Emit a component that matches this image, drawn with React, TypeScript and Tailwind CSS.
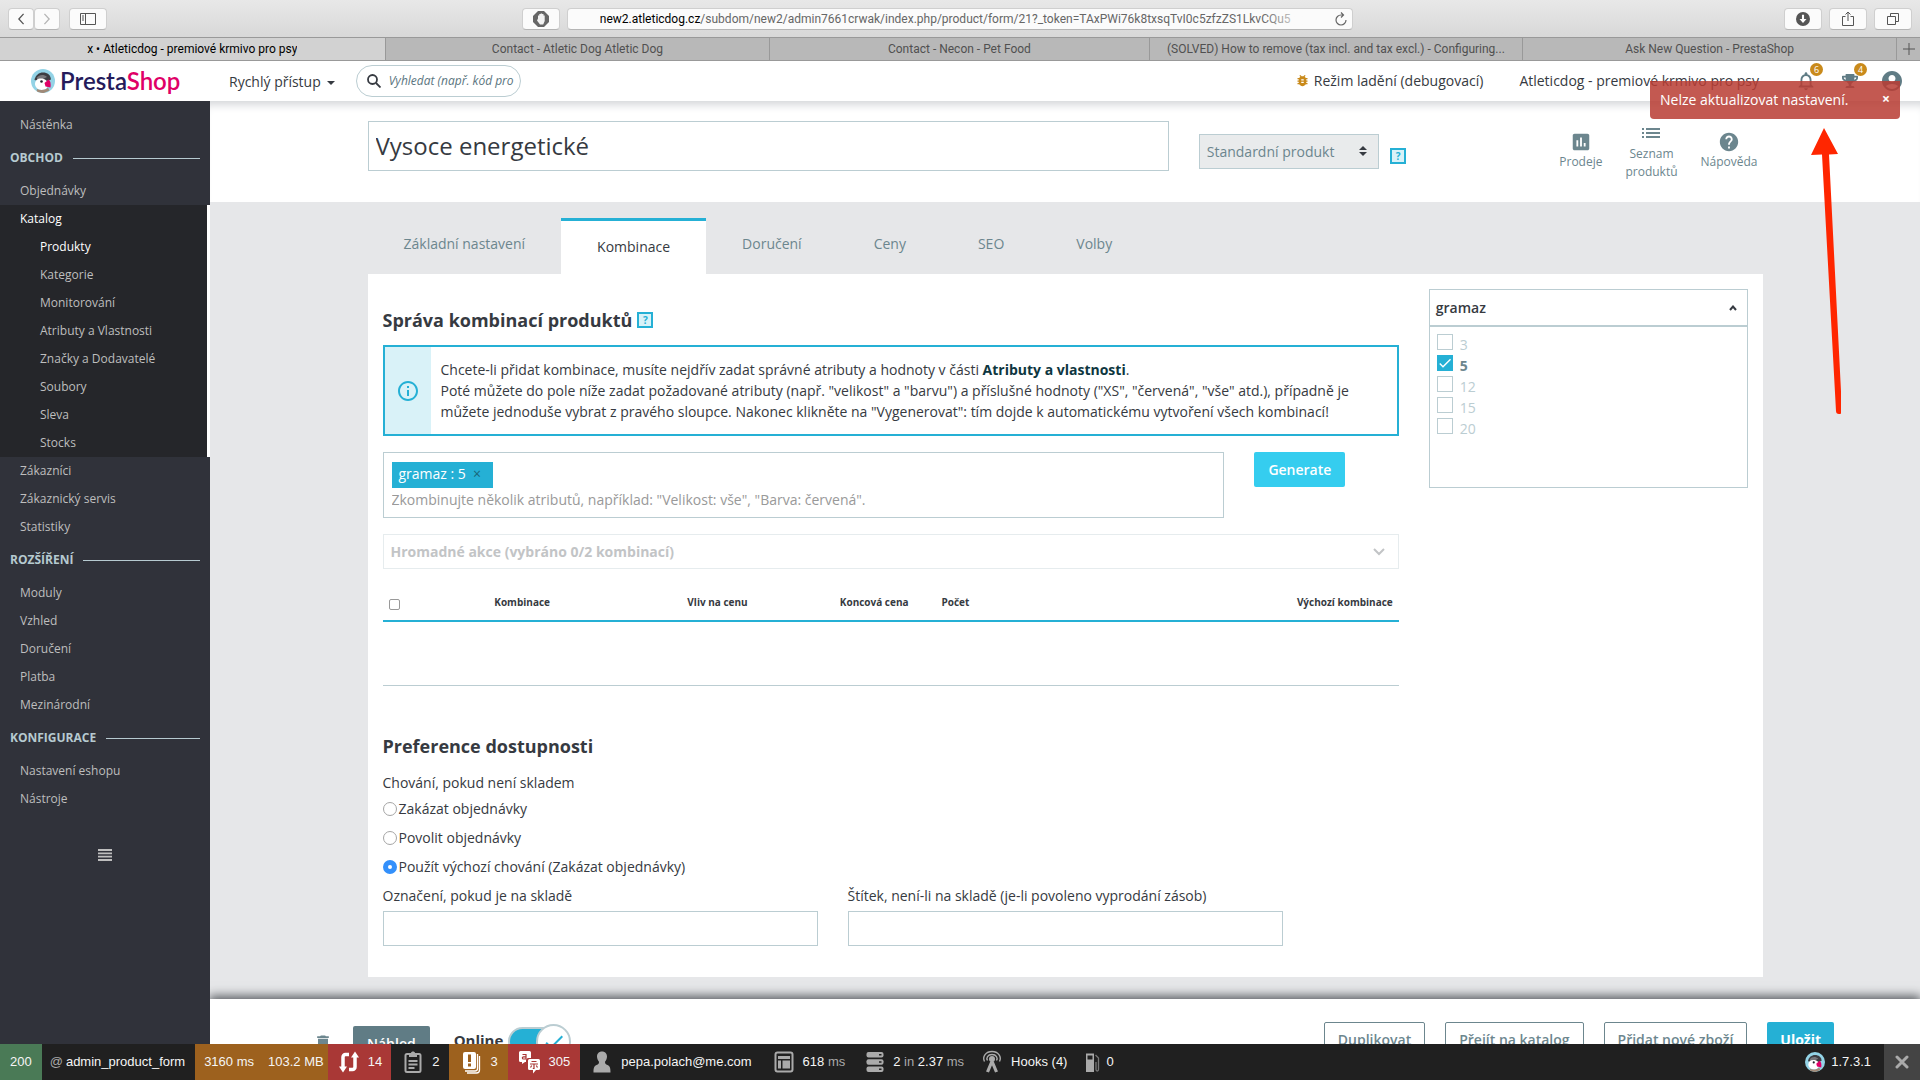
import type { ReactNode } from "react";
import {
  MdAccountCircle,
  MdAssessment,
  MdBugReport,
  MdCheck,
  MdDelete,
  MdHelp,
  MdInfoOutline,
  MdList,
  MdNotificationsNone,
} from "react-icons/md";
import { FaTrophy } from "react-icons/fa";

/* ---------- small drawings ---------- */

function Puffin({ className }: { className: string }) {
  return (
    <svg viewBox="0 0 24 24" className={className} aria-hidden="true">
      <clipPath id="puffin-disc">
        <circle cx="12" cy="12" r="12" />
      </clipPath>
      <g clipPath="url(#puffin-disc)">
        <rect width="24" height="24" fill="#93d3e6" />
        <path d="M3.500 11C4.500 6 8 3.500 12 3.500c4.500 0 7.500 2.500 8 7L13 13z" fill="#3d3d42" />
        <path d="M6 8.500C8 5.500 13 5 16 8l-4 2-6 1z" fill="#77777b" />
        <path d="M4 15c0-3.500 2.500-5.500 6-5.500 4 0 7 2.500 7 5.500 0 3-2 6-6 6s-7-3-7-6z" fill="#fff" />
        <circle cx="10.500" cy="12.500" r="1.300" fill="#22222a" />
        <path d="M13.500 14l4-3.500c2 1.500 2.500 4 2 8l-5-1z" fill="#df0067" />
        <path d="M6 20c3 1.500 8 1.500 11-1.500l1.500 3L12 24.500 5.500 23z" fill="#a08a78" />
      </g>
    </svg>
  );
}

function LoopIcon() {
  return (
    <svg viewBox="0 0 24 24" className="size-6" fill="none" stroke="#fff" strokeWidth="3.500" aria-hidden="true">
      <path d="M12 4.500H8.500a2.500 2.500 0 0 0-2.500 2.500v12M12 19.500h3.500a2.500 2.500 0 0 0 2.500-2.500V6" />
      <path d="M2 16.500h8L6 22.500zM14 7.500h8L18 1.500z" fill="#fff" stroke="none" />
    </svg>
  );
}

function ClipboardIcon() {
  return (
    <svg viewBox="0 0 24 24" className="size-6" fill="none" stroke="#aaa" strokeWidth="2" aria-hidden="true">
      <rect x="4.500" y="4" width="15" height="18" rx="1.500" />
      <path d="M7.500 11h9M7.500 14.500h9M7.500 18h6" />
      <path d="M8 3h2c0-2 4-2 4 0h2v4H8z" fill="#aaa" stroke="none" />
    </svg>
  );
}

function WarningPagesIcon() {
  return (
    <svg viewBox="0 0 24 24" className="size-6" fill="none" aria-hidden="true">
      <rect x="4" y="2" width="13" height="17" rx="2" fill="#fff" />
      <path d="M18.500 4v14.500c0 1.500-1 2.500-2.500 2.500H6M20.500 6v14c0 1.800-1 3-3 3H8" stroke="#fff" strokeWidth="1.300" />
      <path d="M9 4.500h3V12H9zM9 13.500h3v3H9z" fill="#9d611e" />
    </svg>
  );
}

function TranslateIcon() {
  return (
    <svg viewBox="0 0 24 24" className="size-6" aria-hidden="true">
      <path d="M2.500 1h9A1.500 1.500 0 0 1 13 2.500V8h-2.500A2.500 2.500 0 0 0 8 10.500V12H7l-3 2v-2H2.500A1.500 1.500 0 0 1 1 10.500v-8A1.500 1.500 0 0 1 2.500 1z" fill="#fff" />
      <path d="M4.500 4.500h3.500v4.500H5.500c-1.500 0-1.500-2.200 0-2.200H8" fill="none" stroke="#a93836" strokeWidth="1.200" />
      <path d="M11.500 9h9a1.500 1.500 0 0 1 1.500 1.500v8a1.500 1.500 0 0 1-1.500 1.500H18l-3 3.500V20h-3.500a1.500 1.500 0 0 1-1.500-1.500v-8A1.500 1.500 0 0 1 11.500 9z" fill="#fff" />
      <path d="M13.500 11.500h5M12 14h8M16 14v4.500h-1.200M13.700 15.500l-1.200 2M18.300 15.500l1.200 2" fill="none" stroke="#a93836" strokeWidth="1.200" />
    </svg>
  );
}

function PersonIcon() {
  return (
    <svg viewBox="0 0 24 24" className="size-6" fill="#aaa" aria-hidden="true">
      <path d="M12 1.500c3.200 0 5 2.300 5 5 0 2-1 4-2 5.200 0 2 .5 2.300 2.500 3.300 2.500 1.300 3 3 3 7.500h-17c0-4.500.500-6.200 3-7.500 2-1 2.500-1.300 2.500-3.300-1-1.200-2-3.200-2-5.200 0-2.700 1.800-5 5-5z" />
    </svg>
  );
}

function LayoutIcon() {
  return (
    <svg viewBox="0 0 24 24" className="size-6" aria-hidden="true">
      <rect x="3.500" y="2.500" width="17" height="19" rx="2" fill="none" stroke="#aaa" strokeWidth="2" />
      <path d="M6 6h12v3H6zM6 10.500h3v8H6zM10.500 10.500H18v8h-7.500z" fill="#aaa" />
    </svg>
  );
}

function DatabaseIcon() {
  return (
    <svg viewBox="0 0 24 24" className="size-6" aria-hidden="true">
      <rect x="3.500" y="2" width="17" height="5.500" rx="2" fill="#aaa" />
      <rect x="3.500" y="9.250" width="17" height="5.500" rx="2" fill="#aaa" />
      <rect x="3.500" y="16.500" width="17" height="5.500" rx="2" fill="#aaa" />
      <path d="M16 4h2.500v1.500H16zM16 11.250h2.500v1.500H16zM16 18.500h2.500V20H16z" fill="#222" />
    </svg>
  );
}

function HooksIcon() {
  return (
    <svg viewBox="0 0 24 24" className="size-6" fill="none" stroke="#aaa" aria-hidden="true">
      <circle cx="12" cy="9" r="3" fill="#aaa" stroke="none" />
      <path d="M12 9v5M11.500 12.500l-4 9.500M12.500 12.500l4 9.500" strokeWidth="3.200" />
      <path d="M7.500 10.500C6 8 7.500 4.500 12 4.500s6 3.500 4.500 6M4.500 11.500C2 6.500 6 1.500 12 1.500s10 5 7.500 10" strokeWidth="1.400" />
    </svg>
  );
}

function FuelIcon() {
  return (
    <svg viewBox="0 0 24 24" className="size-6" aria-hidden="true">
      <path d="M5 3.500h8V22H5z" fill="#aaa" />
      <path d="M6.500 5.500h5v4h-5z" fill="#222" />
      <path d="M14.500 5l3 3v11.500c0 2-2.500 2-2.500 0V12" fill="none" stroke="#777" strokeWidth="1.300" />
    </svg>
  );
}

/* ---------- browser window ---------- */

const chromeButton =
  "flex h-[22px] items-center justify-center rounded border border-[#cfcfcf] border-b-[#b5b5b5] bg-[#fbfbfb] text-[#555]";

function BrowserChrome() {
  const tabs = [
    { title: "Contact - Atletic Dog Atletic Dog", grow: "flex-[385]" },
    { title: "Contact - Necon - Pet Food", grow: "flex-[379]" },
    { title: "(SOLVED) How to remove (tax incl. and tax excl.) - Configuring...", grow: "flex-[373]" },
    { title: "Ask New Question - PrestaShop", grow: "flex-[373]" },
  ];
  return (
    <div className="shrink-0 font-[Roboto,sans-serif]">
      <div className="flex h-[37px] items-center bg-linear-to-b from-[#e8e8e8] to-[#d8d8d8] px-2">
        <div className="flex flex-[514] items-center">
          <button className={chromeButton + " w-[26px]"} aria-label="Back">
            <svg viewBox="0 0 8 14" className="h-3 w-2" fill="none" stroke="#555" strokeWidth="1.500">
              <path d="M7 1L1.500 7 7 13" />
            </svg>
          </button>
          <button className={chromeButton + " w-[26px]"} aria-label="Forward">
            <svg viewBox="0 0 8 14" className="h-3 w-2" fill="none" stroke="#b5b5b5" strokeWidth="1.500">
              <path d="M1 1l5.500 6L1 13" />
            </svg>
          </button>
          <button className={chromeButton + " ml-[9px] w-[38px]"} aria-label="Sidebar">
            <svg viewBox="0 0 16 12" className="h-3 w-4" fill="none" stroke="#555">
              <path d="M.5.500h15v11H.500zM5.500.500v11M2 3h2M2 5h2M2 7h2" />
            </svg>
          </button>
        </div>
        <button className={chromeButton + " w-[38px]"} aria-label="Blocker">
          <svg viewBox="0 0 16 16" className="size-4">
            <path d="M5 0h6l5 5v6l-5 5H5l-5-5V5z" fill="#666" />
            <path d="M5 7.500V4.500h1.300V3h1.400v-.500h1.400V3h1.400v1.500h1.200v5.500l-1.500 3.500H7L4 9.500z" fill="#f2f2f2" />
          </svg>
        </button>
        <div className="ml-[7px] flex h-[22px] w-[41.3%] items-center rounded border border-[#cfcfcf] border-b-[#b5b5b5] bg-[#fbfbfb] pr-1 pl-8">
          <p className="relative flex-1 overflow-hidden text-[12px] whitespace-nowrap text-[#666]">
            <span className="text-black">new2.atleticdog.cz</span>
            /subdom/new2/admin7661crwak/index.php/product/form/21?_token=TAxPWi76k8txsqTvI0c5zfzZS1LkvCQu5
            <span className="absolute inset-y-0 right-6 w-12 bg-linear-to-r from-transparent to-[#fbfbfb]" />
          </p>
          <button aria-label="Reload">
            <svg viewBox="0 0 14 14" className="size-3.5" fill="none" stroke="#666" strokeWidth="1.200">
              <path d="M9 3H7a5 5 0 1 0 5 5M7 .500L9.500 3 7 5.500" />
            </svg>
          </button>
        </div>
        <div className="flex flex-[559] justify-end gap-[7px]">
          <button className={chromeButton + " w-[38px]"} aria-label="Downloads">
            <svg viewBox="0 0 16 16" className="size-3.5">
              <circle cx="8" cy="8" r="8" fill="#555" />
              <path d="M6.800 3h2.400v5H12l-4 4.500L4 8h2.800z" fill="#fff" />
            </svg>
          </button>
          <button className={chromeButton + " w-[38px]"} aria-label="Share">
            <svg viewBox="0 0 12 16" className="h-4 w-3" fill="none" stroke="#555">
              <path d="M3.500 5.500h-3v9h11v-9h-3M6 10V1M3.500 3.500L6 1l2.500 2.500" />
            </svg>
          </button>
          <button className={chromeButton + " w-[38px]"} aria-label="Windows">
            <svg viewBox="0 0 14 14" className="size-3.5" fill="none" stroke="#555">
              <path d="M1.500 4.500h8v8h-8zM4.500 4V1.500h8v8H10" />
            </svg>
          </button>
        </div>
      </div>
      <div className="flex h-6 border-y border-[#999] bg-[#b8b8b8] text-[12px] text-[#505050]">
        <div className="flex min-w-0 flex-[386] items-center justify-center bg-[#d2d2d2] px-4 text-black">
          <span className="truncate">x • Atleticdog - premiové krmivo pro psy</span>
        </div>
        {tabs.map((tab) => (
          <div
            key={tab.title}
            className={"flex min-w-0 items-center justify-center border-l border-[#999] px-4 " + tab.grow}
          >
            <span className="truncate">{tab.title}</span>
          </div>
        ))}
        <button className="flex w-6 items-center justify-center border-l border-[#999]" aria-label="New tab">
          <svg viewBox="0 0 12 12" className="size-3" stroke="#555">
            <path d="M6 0v12M0 6h12" />
          </svg>
        </button>
      </div>
    </div>
  );
}

/* ---------- admin page ---------- */

function Badge({ children }: { children: ReactNode }) {
  return (
    <span className="absolute -top-[7px] -right-1.5 flex size-[13px] items-center justify-center rounded-full bg-[#c98a1b] text-[9px] text-white">
      {children}
    </span>
  );
}

function Header() {
  return (
    <header className="relative z-10 flex h-10 shrink-0 items-center bg-white text-[14px] text-[#363a41]">
      <a href="#home" className="ml-[31px] flex w-[198px] items-center gap-[5px]">
        <Puffin className="size-6" />
        <span className="font-[Lato,sans-serif] text-[24px] leading-6 font-semibold text-[#251b5b]">
          Presta<span className="text-[#df0067]">Shop</span>
        </span>
      </a>
      <button className="flex items-center gap-1.5">
        Rychlý přístup
        <svg viewBox="0 0 8 4" className="mt-1 h-1 w-2" fill="#363a41">
          <path d="M0 0h8L4 4z" />
        </svg>
      </button>
      <label className="ml-[21px] flex h-8 w-[165px] items-center gap-2 rounded-full border border-[#bbcdd2] pr-1 pl-[10px]">
        <svg viewBox="0 0 14 14" className="size-3.5 shrink-0" fill="none" stroke="#363a41" strokeWidth="1.800">
          <circle cx="5.500" cy="5.500" r="4.500" />
          <path d="M9 9l4.500 4.500" />
        </svg>
        <input
          aria-label="Vyhledat"
          placeholder="Vyhledat (např. kód pro"
          className="w-full min-w-0 text-[12px] italic outline-none placeholder:text-[#5b7580]"
        />
      </label>
      <div className="ml-auto flex items-center">
        <a href="#debug" className="flex items-center gap-1 pb-0.5">
          <MdBugReport className="size-[15px] text-[#c98a1b]" />
          Režim ladění (debugovací)
        </a>
        <a href="#shop" className="ml-9 pb-0.5">Atleticdog - premiové krmivo pro psy</a>
        <button className="relative ml-9 flex size-[22px] items-center justify-center" aria-label="Oznámení">
          <MdNotificationsNone className="size-[22px] text-[#607c85]" />
          <Badge>6</Badge>
        </button>
        <button className="relative ml-[22px] flex size-[22px] items-center justify-center" aria-label="Ocenění">
          <FaTrophy className="size-4 text-[#607c85]" />
          <Badge>4</Badge>
        </button>
        <button className="mr-4 ml-[19px]" aria-label="Účet">
          <MdAccountCircle className="size-6 text-[#607c85]" />
        </button>
      </div>
    </header>
  );
}

function MenuItem({ children }: { children: ReactNode }) {
  return (
    <li>
      <a href="#menu" className="block h-7 pl-5 leading-7">{children}</a>
    </li>
  );
}

function MenuTitle({ children }: { children: ReactNode }) {
  return (
    <li className="flex h-[38px] items-center gap-2.5 px-2.5 font-bold text-[#b6cad0] uppercase">
      {children}
      <span className="h-px flex-1 bg-[#b6cad0]" />
    </li>
  );
}

function Sidebar() {
  const catalog = ["Kategorie", "Monitorování", "Atributy a Vlastnosti", "Značky a Dodavatelé", "Soubory", "Sleva", "Stocks"];
  return (
    <nav className="w-[210px] shrink-0 bg-[#30323a] pt-[10px] text-[12px] text-[#bebebe]">
      <ul>
        <MenuItem>Nástěnka</MenuItem>
        <MenuTitle>Obchod</MenuTitle>
        <MenuItem>Objednávky</MenuItem>
        <li className="border-r-[3px] border-white bg-[#25262a]">
          <a href="#catalog" className="block h-7 pl-5 leading-7 font-medium text-white">Katalog</a>
          <ul className="pl-5">
            <li>
              <a href="#products" className="block h-7 pl-5 leading-7 font-medium text-white">Produkty</a>
            </li>
            {catalog.map((name) => (
              <MenuItem key={name}>{name}</MenuItem>
            ))}
          </ul>
        </li>
        <MenuItem>Zákazníci</MenuItem>
        <MenuItem>Zákaznický servis</MenuItem>
        <MenuItem>Statistiky</MenuItem>
        <MenuTitle>Rozšíření</MenuTitle>
        <MenuItem>Moduly</MenuItem>
        <MenuItem>Vzhled</MenuItem>
        <MenuItem>Doručení</MenuItem>
        <MenuItem>Platba</MenuItem>
        <MenuItem>Mezinárodní</MenuItem>
        <MenuTitle>Konfigurace</MenuTitle>
        <MenuItem>Nastavení eshopu</MenuItem>
        <MenuItem>Nástroje</MenuItem>
      </ul>
      <button className="mx-auto mt-9 block" aria-label="Sbalit menu">
        <svg viewBox="0 0 14 12" className="h-3 w-3.5" stroke="#bebebe" strokeWidth="1.800">
          <path d="M0 1h14M0 4.300h14M0 7.700h14M0 11h14" />
        </svg>
      </button>
    </nav>
  );
}

function HelpBox() {
  return (
    <button
      className="flex size-4 shrink-0 items-center justify-center border-2 border-[#25b0d5] bg-[#d9f2f8] text-[10px] font-bold text-[#25b0d5]"
      aria-label="Nápověda k poli"
    >
      ?
    </button>
  );
}

function ProductHeader() {
  return (
    <div className="h-[101px] shrink-0 bg-white shadow-[inset_0_10px_8px_-6px_#d5d7da]">
      <div className="mx-auto flex w-10/12 pt-5">
        <div className="w-7/12 px-[15px]">
          <input
            aria-label="Název produktu"
            defaultValue="Vysoce energetické"
            className="h-[50px] w-full border border-[#bbcdd2] px-[7px] pb-0.5 text-[24px] text-[#363a41]"
          />
        </div>
        <div className="flex w-2/12 items-start gap-[11px] px-[15px] pt-[13px]">
          <div className="relative flex-1">
            <select
              aria-label="Typ produktu"
              className="block h-[35px] w-full appearance-none border border-[#bbcdd2] bg-[#e9ebec] pl-[7px] text-[14px] text-[#6c868e]"
            >
              <option>Standardní produkt</option>
            </select>
            <svg viewBox="0 0 8 10" className="pointer-events-none absolute top-3 right-3 h-2.5 w-2" fill="#363a41">
              <path d="M0 4l4-4 4 4zM0 6h8l-4 4z" />
            </svg>
          </div>
          <div className="pt-3.5">
            <HelpBox />
          </div>
        </div>
        <div className="flex flex-1 items-center justify-end gap-[22px] pr-5 text-center text-[12px] leading-[18px] text-[#6c868e]">
          <a href="#sales" className="flex flex-col items-center">
            <MdAssessment className="size-[22px]" />
            Prodeje
          </a>
          <a href="#list" className="flex w-[54px] flex-col items-center">
            <MdList className="size-6" />
            Seznam produktů
          </a>
          <a href="#help" className="flex flex-col items-center">
            <MdHelp className="size-[22px]" />
            Nápověda
          </a>
        </div>
      </div>
    </div>
  );
}

function Tabs() {
  return (
    <div role="tablist" className="flex h-14 text-[14px] text-[#6c868e]">
      <button role="tab" className="px-9 pb-1.5">Základní nastavení</button>
      <button role="tab" aria-selected="true" className="border-t-[3px] border-[#25b0d5] bg-white px-9 pb-0.5 text-[#363a41]">
        Kombinace
      </button>
      {["Doručení", "Ceny", "SEO", "Volby"].map((name) => (
        <button key={name} role="tab" className="px-9 pb-1.5">{name}</button>
      ))}
    </div>
  );
}

function Combinations() {
  return (
    <section className="px-[15px]">
      <h2 className="flex h-[26px] items-center gap-[5px] text-[18px] font-bold">
        Správa kombinací produktů
        <HelpBox />
      </h2>
      <div className="mt-3 flex h-[91px] border-2 border-[#25b0d5]">
        <div className="flex w-[46px] shrink-0 items-center justify-center bg-[#d9f2f8]">
          <MdInfoOutline className="size-6 text-[#25b0d5]" />
        </div>
        <p className="flex-1 self-center pr-2 pl-[10px] text-[14px] leading-[21px]">
          Chcete-li přidat kombinace, musíte nejdřív zadat správné atributy a hodnoty v části{" "}
          <a href="#attributes" className="font-bold text-[#0e3640]">Atributy a vlastnosti</a>.
          <br />
          Poté můžete do pole níže zadat požadované atributy (např. "velikost" a "barvu") a příslušné hodnoty ("XS",
          "červená", "vše" atd.), případně je můžete jednoduše vybrat z pravého sloupce. Nakonec klikněte na
          "Vygenerovat": tím dojde k automatickému vytvoření všech kombinací!
        </p>
      </div>
      <div className="-mx-[15px] mt-4 flex items-start">
        <div className="w-10/12 px-[15px]">
          <div className="h-[66px] border border-[#bbcdd2] px-2 pt-2">
            <span className="inline-flex h-[26px] items-center bg-[#25b0d5] pr-3 pb-0.5 pl-[7px] text-[14px] text-white">
              gramaz : 5
              <button className="ml-[7px] text-[14px] leading-none text-[#1a6579]" aria-label="Odebrat gramaz : 5">×</button>
            </span>
            <input
              aria-label="Atributy"
              placeholder={'Zkombinujte několik atributů, například: "Velikost: vše", "Barva: červená".'}
              className="block h-6 w-full text-[14px] outline-none placeholder:text-[#999]"
            />
          </div>
        </div>
        <div className="w-2/12 px-[15px]">
          <button className="h-[35px] rounded-xs bg-[#35cdef] px-3.5 text-[14px] font-semibold text-white">Generate</button>
        </div>
      </div>
      <button className="mt-4 flex h-[35px] w-full items-center justify-between border border-[#e6ecee] pr-[13px] pl-[7px] text-[14px] font-bold text-[#c2c4c6]">
        Hromadné akce (vybráno 0/2 kombinací)
        <svg viewBox="0 0 12 8" className="h-2 w-3" fill="none" stroke="#c2c4c6" strokeWidth="2">
          <path d="M1 1l5 5 5-5" />
        </svg>
      </button>
      <table className="mt-[15px] w-full table-fixed border-b border-[#bbcdd2] text-left text-[10px]">
        <thead>
          <tr className="h-[37px] border-b-2 border-[#25b0d5]">
            <th className="w-[11%] pl-[6px] align-middle">
              <input
                type="checkbox"
                aria-label="Vybrat vše"
                className="mt-1 block size-[11px] appearance-none rounded-xs border border-[#999]"
              />
            </th>
            <th className="w-[19%]">Kombinace</th>
            <th className="w-[15%]">Vliv na cenu</th>
            <th className="w-[10%]">Koncová cena</th>
            <th>Počet</th>
            <th className="pr-[6px] text-right">Výchozí kombinace</th>
          </tr>
        </thead>
        <tbody>
          <tr className="h-16">
            <td colSpan={6} />
          </tr>
        </tbody>
      </table>
    </section>
  );
}

function AttributePicker() {
  const values = ["3", "5", "12", "15", "20"];
  return (
    <aside className="w-3/12 px-[15px] pt-[15px]">
      <div className="h-[199px] border border-[#bbcdd2]">
        <button className="flex h-[37px] w-full items-center justify-between border-b-2 border-[#bbcdd2] pr-2.5 pl-[6px] text-[14px] font-semibold">
          gramaz
          <svg viewBox="0 0 8 6" className="h-1.5 w-2" fill="none" stroke="#363a41" strokeWidth="2">
            <path d="M1 5l3-3.500L7 5" />
          </svg>
        </button>
        <div className="pt-[7px] pl-[7px] text-[14px] text-[#bbcdd2]">
          {values.map((value) => (
            <label key={value} className="flex h-[21px] gap-[7px] leading-[22px] has-checked:font-bold has-checked:text-[#6c868e]">
              <span className="relative">
                <input
                  type="checkbox"
                  defaultChecked={value === "5"}
                  className="peer block size-4 appearance-none border border-[#bbcdd2] checked:border-[#25b0d5] checked:bg-[#25b0d5]"
                />
                <MdCheck className="pointer-events-none absolute top-0 left-0 hidden size-4 text-white peer-checked:block" />
              </span>
              {value}
            </label>
          ))}
        </div>
      </div>
    </aside>
  );
}

function Availability() {
  const options = ["Zakázat objednávky", "Povolit objednávky", "Použít výchozí chování (Zakázat objednávky)"];
  const field = "mt-[5px] block h-[35px] w-full border border-[#bbcdd2] px-2";
  return (
    <section className="px-[15px] pt-[47px] text-[14px]">
      <h2 className="text-[18px] leading-[26px] font-bold">Preference dostupnosti</h2>
      <fieldset className="pt-[13px]">
        <legend className="float-left w-full leading-[21px]">Chování, pokud není skladem</legend>
        <div className="clear-both pt-px">
          {options.map((option, index) => (
            <label key={option} className="flex h-[29px] items-center gap-0.5">
              <input
                type="radio"
                name="out-of-stock"
                defaultChecked={index === 2}
                className="mt-0.5 size-3.5 appearance-none rounded-full border border-[#a5a5a5] checked:border-[5px] checked:border-[#3390fb]"
              />
              {option}
            </label>
          ))}
        </div>
      </fieldset>
      <div className="grid grid-cols-[repeat(3,minmax(0,1fr))] gap-[30px] pt-1">
        <label className="leading-[21px]">
          Označení, pokud je na skladě
          <input className={field} />
        </label>
        <label className="leading-[21px] whitespace-nowrap">
          Štítek, není-li na skladě (je-li povoleno vyprodání zásob)
          <input className={field} />
        </label>
      </div>
    </section>
  );
}

function ActionBar() {
  const outline = "h-[35px] rounded-xs border border-[#6c868e] px-[13px] text-[#6c868e]";
  return (
    <div className="relative z-10 mt-auto flex h-[45px] shrink-0 items-start justify-between overflow-hidden bg-white pr-[86px] pl-[103px] text-[14px] font-semibold shadow-[0_-2px_10px_1px_#55595e]">
      <div className="flex items-start pt-[25px]">
        <button className="pt-[9px]" aria-label="Smazat">
          <MdDelete className="size-5 text-[#6c868e]" />
        </button>
        <button className="mt-0.5 ml-5 h-[35px] rounded-xs bg-[#607c85] px-[14px] text-white">Náhled</button>
        <label className="ml-6 flex items-start gap-[5px]">
          <span className="pt-1 text-[15px] leading-6 font-bold">Online</span>
          <span className="relative block h-[35px] w-[63px]">
            <input
              type="checkbox"
              role="switch"
              defaultChecked
              className="mt-[3px] block h-[29px] w-[60px] appearance-none rounded-full border-2 border-[#bbcdd2] bg-[#25b0d5]"
            />
            <span className="absolute top-0 right-0 flex size-[35px] items-center justify-center rounded-full border-2 border-[#bbcdd2] bg-white">
              <MdCheck className="size-6 text-[#25b0d5]" />
            </span>
          </span>
        </label>
      </div>
      <div className="flex gap-5 pt-[23px]">
        <button className={outline}>Duplikovat</button>
        <button className={outline}>Přejít na katalog</button>
        <button className={outline}>Přidat nové zboží</button>
        <button className="h-[35px] rounded-xs bg-[#25b0d5] px-[13px] font-bold text-white">Uložit</button>
      </div>
    </div>
  );
}

function DebugBar() {
  return (
    <div className="relative z-20 flex h-9 shrink-0 items-stretch bg-[#202020] font-['Liberation_Sans',Arial,sans-serif] text-[13px] text-[#f5f5f5] *:flex *:items-center">
      <div className="bg-[#4a7a56] px-[10px]">200</div>
      <div className="gap-[3px] pr-2.5 pl-2">
        <span className="text-[#aaa]">@</span>admin_product_form
      </div>
      <div className="gap-3.5 bg-[#9d611e] pr-1 pl-[9px]">
        <span>3160 ms</span>
        <span>103.2 MB</span>
      </div>
      <div className="gap-[7px] bg-[#a93836] px-[9px]"><LoopIcon />14</div>
      <div className="gap-[7px] px-2.5"><ClipboardIcon />2</div>
      <div className="gap-[7px] bg-[#9d611e] px-2.5"><WarningPagesIcon />3</div>
      <div className="gap-[7px] bg-[#a93836] px-2.5"><TranslateIcon />305</div>
      <div className="gap-[7px] px-2.5"><PersonIcon />pepa.polach@me.com</div>
      <div className="gap-[7px] px-2.5"><LayoutIcon /><span>618 <span className="text-[#aaa]">ms</span></span></div>
      <div className="gap-[6px] px-2">
        <DatabaseIcon />
        <span>2 <span className="text-[#aaa]">in</span> 2.37 <span className="text-[#aaa]">ms</span></span>
      </div>
      <div className="gap-[7px] px-2"><HooksIcon />Hooks (4)</div>
      <div className="gap-px pr-2.5 pl-1.5"><FuelIcon />0</div>
      <div className="ml-auto gap-[6px] pr-[13px]"><Puffin className="size-5" />1.7.3.1</div>
      <button className="w-9 justify-center bg-[#444]" aria-label="Zavřít">
        <svg viewBox="0 0 14 14" className="size-3.5" stroke="#aaa" strokeWidth="3" strokeLinecap="round">
          <path d="M2 2l10 10M12 2L2 12" />
        </svg>
      </button>
    </div>
  );
}

export default function App() {
  return (
    <div className="relative flex h-screen flex-col overflow-hidden bg-[#e6e7e9] font-['Open_Sans',sans-serif] text-[#363a41]">
      <BrowserChrome />
      <Header />
      <div className="flex min-h-0 flex-1">
        <Sidebar />
        <main className="flex min-w-0 flex-1 flex-col overflow-hidden">
          <ProductHeader />
          <div className="mx-auto w-10/12 px-[15px] pt-4">
            <Tabs />
            <div className="bg-white pb-[31px]">
              <div className="flex">
                <div className="w-9/12 pt-[33px]">
                  <Combinations />
                </div>
                <AttributePicker />
              </div>
              <Availability />
            </div>
          </div>
          <ActionBar />
        </main>
      </div>
      <DebugBar />
      <div
        role="alert"
        className="absolute top-[81px] right-5 z-30 flex h-[38px] w-[250px] items-center justify-between rounded-b-sm bg-[#b93c32]/85 px-[10px] pb-0.5 text-[14px] text-white"
      >
        Nelze aktualizovat nastavení.
        <button className="text-[14px] leading-none font-bold" aria-label="Zavřít">×</button>
      </div>
      <svg viewBox="0 0 30 286" className="pointer-events-none absolute top-[128px] right-[79px] z-30 h-[286px] w-[30px]">
        <path d="M13 0L0 27l11-.500L25 283a3 3 0 0 0 6 0L18 26.500l9-.500z" fill="#ff2600" />
      </svg>
    </div>
  );
}
